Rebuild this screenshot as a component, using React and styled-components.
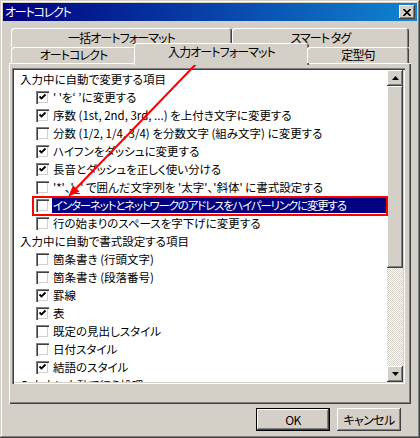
import React from 'react';
import styled, { createGlobalStyle } from 'styled-components';

const face = '#d4d0c8';

const GlobalStyle = createGlobalStyle`
  html, body {
    margin: 0;
    padding: 0;
    background: ${face};
  }
  * {
    box-sizing: border-box;
  }
`;

const raised = `
  box-shadow: inset -1px -1px #404040, inset 1px 1px #fff, inset -2px -2px #808080;
`;

const Window = styled.div`
  position: relative;
  width: 420px;
  height: 438px;
  padding: 3px;
  background: ${face};
  font-family: "Noto Sans CJK JP", "Liberation Sans", sans-serif;
  font-size: 11.5px;
  font-feature-settings: "palt";
  color: #000;
  box-shadow: inset -1px -1px #404040, inset 1px 1px ${face}, inset -2px -2px #808080, inset 2px 2px #fff;
`;

const TitleBar = styled.div`
  display: flex;
  align-items: center;
  justify-content: space-between;
  height: 18px;
  padding: 0 2px 0 2px;
  background: linear-gradient(to right, #000080, #1084d0);
  color: #fff;
  font-size: 12px;
  letter-spacing: -1.2px;
  line-height: 18px;
`;

const CloseButton = styled.div`
  display: flex;
  align-items: center;
  justify-content: center;
  width: 16px;
  height: 14px;
  background: ${face};
  ${raised}
`;

const Body = styled.div`
  padding: 7px 0 0 6px;
`;

const TabStrip = styled.div`
  display: flex;
  flex-direction: column;
  margin-left: 2px;
`;

const BackRow = styled.div`
  display: flex;
  height: 19px;
`;

const FrontRow = styled.div`
  position: relative;
  z-index: 2;
  display: flex;
  align-items: flex-start;
  height: 18px;
`;

const Tab = styled.div`
  display: flex;
  align-items: center;
  justify-content: center;
  flex: none;
  width: ${p => p.$w}px;
  height: ${p => (p.$selected ? 22 : p.$front ? 16 : 19)}px;
  margin: ${p => (p.$selected ? '-4px -2px 0 -2px' : '0')};
  padding-bottom: ${p => (p.$selected ? 4 : 0)}px;
  background: ${face};
  border-radius: 3px 3px 0 0;
  box-shadow: inset 1px 1px #fff, inset -1px 0 #404040, inset -2px 0 #808080;
  font-size: 12px;
  letter-spacing: -0.9px;
  line-height: 16px;
`;

const Panel = styled.div`
  margin-top: -2px;
  width: 402px;
  height: 341px;
  padding: 5px 0 0 3px;
  box-shadow: inset 1px 1px #fff, inset -1px -1px #404040, inset -2px -2px #808080;
`;

const ListBox = styled.div`
  display: flex;
  width: 393px;
  height: 316px;
  padding: 2px;
  background: #fff;
  box-shadow: inset 1px 1px #808080, inset 2px 2px #404040, inset -1px -1px #fff, inset -2px -2px ${face};
`;

const ListContent = styled.div`
  flex: 1;
  overflow: hidden;
`;

const Row = styled.div`
  display: flex;
  align-items: center;
  height: 18px;
  padding-left: ${p => (p.$indent ? 22 : 5)}px;
  white-space: nowrap;
`;

const Label = styled.span`
  flex: ${p => (p.$selected ? 1 : 'none')};
  margin-left: ${p => (p.$check ? 3 : 0)}px;
  padding: 0 1px;
  height: 16px;
  line-height: 16px;
  letter-spacing: ${p => (p.$tight ? '-1.2px' : 'normal')};
  background: ${p => (p.$selected ? '#000080' : 'transparent')};
  color: ${p => (p.$selected ? '#fff' : '#000')};
`;

const Box = styled.span`
  display: inline-flex;
  flex: none;
  align-items: center;
  justify-content: center;
  width: 13px;
  height: 13px;
  background: #fff;
  box-shadow: inset 1px 1px #808080, inset 2px 2px #404040, inset -1px -1px #fff, inset -2px -2px ${face};
`;

const ScrollBar = styled.div`
  display: flex;
  flex-direction: column;
  width: 16px;
`;

const ArrowButton = styled.div`
  display: flex;
  align-items: center;
  justify-content: center;
  height: 16px;
  background: ${face};
  ${raised}
`;

const Thumb = styled.div`
  height: ${p => p.$h}px;
  background: ${face};
  ${raised}
`;

const Track = styled.div`
  flex: 1;
  background: repeating-conic-gradient(${face} 0 25%, #fff 0 50%) 0 0 / 2px 2px;
`;

const Footer = styled.div`
  display: flex;
  justify-content: flex-end;
  gap: 7px;
  margin-top: 4px;
  padding-right: 16px;
`;

const Button = styled.div`
  display: flex;
  align-items: center;
  justify-content: center;
  width: ${p => p.$w}px;
  height: 23px;
  background: ${face};
  font-size: 12px;
  letter-spacing: -0.6px;
  box-shadow: ${p =>
    p.$default
      ? 'inset 0 0 0 1px #000, inset -2px -2px #404040, inset 2px 2px #fff, inset -3px -3px #808080'
      : 'inset -1px -1px #404040, inset 1px 1px #fff, inset -2px -2px #808080'};
`;

const Overlay = styled.svg`
  position: absolute;
  left: 0;
  top: 0;
  pointer-events: none;
`;

const CheckBox = ({ checked }) => (
  <Box>
    {checked && (
      <svg width="9" height="9" viewBox="0 0 9 9">
        <path d="M1.5 3.5 L3.5 5.5 L7.5 1.5" fill="none" stroke="#000" strokeWidth="1.8" />
      </svg>
    )}
  </Box>
);

const Triangle = ({ down }) => (
  <svg width="7" height="4" viewBox="0 0 7 4">
    <polygon points={down ? '0,0 7,0 3.5,4' : '3.5,0 7,4 0,4'} fill="#000" />
  </svg>
);

const items = [
  { head: '入力中に自動で変更する項目' },
  { text: "' 'を‘ ’に変更する", checked: true },
  { text: '序数 (1st, 2nd, 3rd, ...) を上付き文字に変更する', checked: true },
  { text: '分数 (1/2, 1/4, 3/4) を分数文字 (組み文字) に変更する' },
  { text: 'ハイフンをダッシュに変更する', checked: true },
  { text: '長音とダッシュを正しく使い分ける', checked: true },
  { text: "'*'、'_' で囲んだ文字列を '太字'、'斜体' に書式設定する" },
  { text: 'インターネットとネットワークのアドレスをハイパーリンクに変更する', selected: true, tight: true },
  { text: '行の始まりのスペースを字下げに変更する' },
  { head: '入力中に自動で書式設定する項目' },
  { text: '箇条書き (行頭文字)' },
  { text: '箇条書き (段落番号)' },
  { text: '罫線', checked: true },
  { text: '表', checked: true },
  { text: '既定の見出しスタイル' },
  { text: '日付スタイル' },
  { text: '結語のスタイル', checked: true },
  { head: '入力中に自動で行う処理' },
];

const App = () => {
  return (
    <Window>
      <GlobalStyle />
      <TitleBar>
        <span>オートコレクト</span>
        <CloseButton>
          <svg width="8" height="7" viewBox="0 0 8 7">
            <path d="M0.5 0 L7.5 7 M7.5 0 L0.5 7" stroke="#000" strokeWidth="1.6" />
          </svg>
        </CloseButton>
      </TitleBar>
      <Body>
        <TabStrip>
          <BackRow>
            <Tab $w={221}>一括オートフォーマット</Tab>
            <Tab $w={177}>スマート タグ</Tab>
          </BackRow>
          <FrontRow>
            <Tab $front $w={125}>オートコレクト</Tab>
            <Tab $front $selected $w={175}>入力オートフォーマット</Tab>
            <Tab $front $w={102}>定型句</Tab>
          </FrontRow>
        </TabStrip>
        <Panel>
          <ListBox>
            <ListContent>
              {items.map((it, i) =>
                it.head ? (
                  <Row key={i}>
                    <Label>{it.head}</Label>
                  </Row>
                ) : (
                  <Row key={i} $indent>
                    <CheckBox checked={it.checked} />
                    <Label $check $selected={it.selected} $tight={it.tight}>{it.text}</Label>
                  </Row>
                )
              )}
            </ListContent>
            <ScrollBar>
              <ArrowButton><Triangle /></ArrowButton>
              <Thumb $h={182} />
              <Track />
              <ArrowButton><Triangle down /></ArrowButton>
            </ScrollBar>
          </ListBox>
        </Panel>
        <Footer>
          <Button $default $w={74}>OK</Button>
          <Button $w={64}>キャンセル</Button>
        </Footer>
      </Body>
      <Overlay width="420" height="438" viewBox="0 0 420 438">
        <rect x="164" y="61" width="114" height="2" fill="#ff0000" />
        <line x1="197" y1="63" x2="76" y2="188.5" stroke="#ff0000" strokeWidth="2" />
        <polygon points="68,197 79.5,191.5 73.1,185.3" fill="#ff0000" />
        <rect x="33" y="197" width="354" height="18" fill="none" stroke="#ff0000" strokeWidth="2" />
      </Overlay>
    </Window>
  );
};

export default App;
